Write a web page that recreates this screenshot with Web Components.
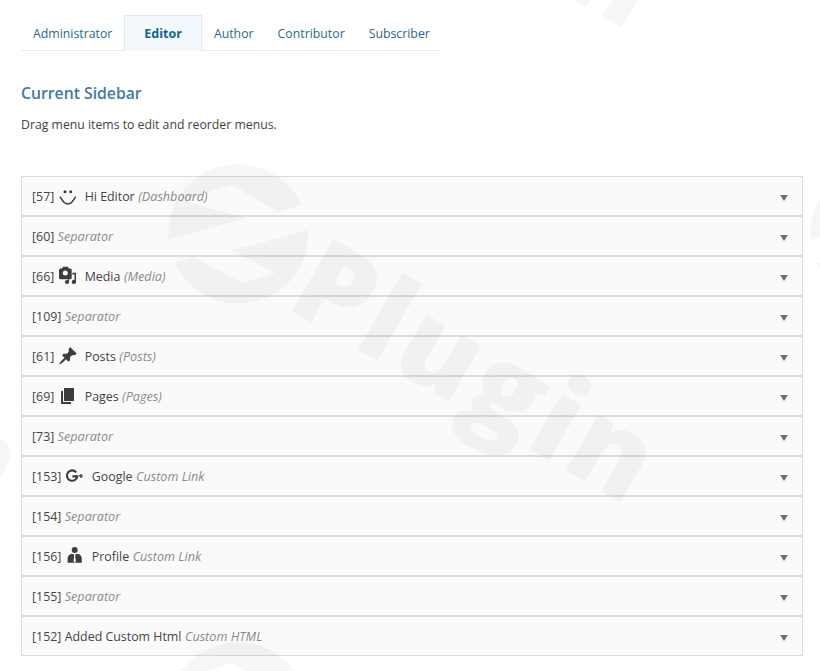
<!DOCTYPE html>
<html lang="en">
<head>
<meta charset="utf-8">
<title>Current Sidebar</title>
<style>
html,body{margin:0;padding:0;background:#fff;height:671px;overflow:hidden}
body{font-family:"Open Sans","Liberation Sans",sans-serif;color:#444;position:relative}
</style>
</head>
<body>
<admin-page>
  <role-tabs>
    <role-tab>Administrator</role-tab>
    <role-tab active>Editor</role-tab>
    <role-tab>Author</role-tab>
    <role-tab>Contributor</role-tab>
    <role-tab>Subscriber</role-tab>
  </role-tabs>
  <section-head title="Current Sidebar">Drag menu items to edit and reorder menus.</section-head>
  <menu-list>
    <menu-row icon="smiley" num="57" label="Hi Editor" kind="(Dashboard)"></menu-row>
    <menu-row num="60" kind="Separator"></menu-row>
    <menu-row icon="media" num="66" label="Media" kind="(Media)"></menu-row>
    <menu-row num="109" kind="Separator"></menu-row>
    <menu-row icon="pin" num="61" label="Posts" kind="(Posts)"></menu-row>
    <menu-row icon="pages" num="69" label="Pages" kind="(Pages)"></menu-row>
    <menu-row num="73" kind="Separator"></menu-row>
    <menu-row icon="gplus" num="153" label="Google" kind="Custom Link"></menu-row>
    <menu-row num="154" kind="Separator"></menu-row>
    <menu-row icon="person" num="156" label="Profile" kind="Custom Link"></menu-row>
    <menu-row num="155" kind="Separator"></menu-row>
    <menu-row num="152" label="Added Custom Html" kind="Custom HTML"></menu-row>
  </menu-list>
</admin-page>
<water-mark></water-mark>
<script>
const ICONS = {
  smiley:'<circle cx="7" cy="5.7" r="1.5"/><circle cx="12.7" cy="5.7" r="1.5"/><path d="M2 10.7Q9.8 25.5 17.7 10.7" fill="none" stroke="currentColor" stroke-width="1.5"/>',
  media:'<path fill-rule="evenodd" d="M2.500 2.500H4L5 .7H9.700L10.700 2.500H12.200Q13.700 2.500 13.700 4V11.800Q13.700 13.300 12.200 13.300H2.500Q1 13.300 1 11.800V4Q1 2.500 2.500 2.500ZM7.300 4.500A2.500 2.500 0 1 0 7.300 9.500A2.500 2.500 0 1 0 7.300 4.500Z"/><circle cx="9" cy="16" r="2.100"/><rect x="9.800" y="13.300" width="1.300" height="3"/><path d="M14.300 6.700H18V16A2.100 2.100 0 1 1 16.500 14V8.400H14.300Z"/>',
  pin:'<path d="M10.44 3.02l1.82-1.82 6.36 6.35-1.83 1.82c-1.05-.68-2.48-.57-3.41.36l-.75.75c-.92.93-1.04 2.35-.35 3.41l-1.83 1.82-2.41-2.41-2.8 2.79c-.42.42-3.38 2.71-3.8 2.29s1.86-3.39 2.28-3.81l2.79-2.79L4.1 9.36l1.83-1.82c1.05.69 2.48.57 3.4-.36l.75-.75c.93-.92 1.05-2.35.36-3.41z"/>',
  pages:'<path d="M6 15V2h10v13H6zm-1 1h8v2H3V5h2v11z"/>',
  gplus:'<path d="M11.200 6.300A5.200 5.200 0 1 0 12.300 10.400H7.400" fill="none" stroke="currentColor" stroke-width="2.100"/><path d="M14 9.300h1.300V8h1.300v1.300h1.300v1.300h-1.300v1.300h-1.300v-1.300H14z"/>',
  person:'<circle cx="9.700" cy="4" r="3"/><path fill-rule="evenodd" d="M6 8H13.400Q16.700 9 16.800 13V16.800H2.600V13Q2.700 9 6 8ZM8.500 8.300L9.200 10 8.500 15.500 9.700 16.500 10.900 15.500 10.200 10 10.900 8.300Z"/>'
};

class AdminPage extends HTMLElement {
  constructor(){
    super();
    this.attachShadow({mode:'open'}).innerHTML = `<style>
      :host{display:flex;flex-direction:column;padding:15px 17px 0 21px;font-family:"Open Sans","Liberation Sans",sans-serif}
    </style><slot></slot>`;
  }
}
class RoleTabs extends HTMLElement {
  constructor(){
    super();
    this.attachShadow({mode:'open'}).innerHTML = `<style>
      :host{display:flex;width:420px;height:36px;box-sizing:border-box;border-bottom:1px solid #e3ecf2}
    </style><slot></slot>`;
  }
}
class RoleTab extends HTMLElement {
  constructor(){
    super();
    this.attachShadow({mode:'open'}).innerHTML = `<style>
      :host{display:block;box-sizing:border-box;height:36px;padding:0 11px;line-height:35px;font-size:12.300px;color:#2b6a8c;border:1px solid transparent;border-bottom:0;white-space:nowrap}
      :host([active]){background:#f2f8fc;border-color:#dfe9f1;color:#106591;font-weight:700;font-size:12.500px;padding:0 19px}
    </style><slot></slot>`;
  }
}
class SectionHead extends HTMLElement {
  constructor(){
    super();
    this.attachShadow({mode:'open'}).innerHTML = `<style>
      :host{display:block;height:125px}
      h2{margin:31px 0 0;font-size:15.750px;line-height:22px;font-weight:600;color:#3f7ba6}
      p{margin:12px 0 0;font-size:12.250px;line-height:18px;color:#444}
    </style><h2></h2><p><slot></slot></p>`;
  }
  connectedCallback(){ this.shadowRoot.querySelector('h2').textContent = this.getAttribute('title'); }
}
class MenuList extends HTMLElement {
  constructor(){
    super();
    this.attachShadow({mode:'open'}).innerHTML = `<style>
      :host{display:flex;flex-direction:column}
    </style><slot></slot>`;
  }
}
class MenuRow extends HTMLElement {
  constructor(){
    super();
    this.attachShadow({mode:'open'}).innerHTML = `<style>
      :host{display:flex;align-items:center;box-sizing:border-box;height:40px;background:#fafafa;border:1px solid #dcdcdc;padding:0 14px 0 10px;font-size:12.400px;color:#444;white-space:nowrap}
      .num{margin-right:3.300px}
      svg{display:block;width:20px;height:20px;margin:0 6.800px 0 .3px;fill:currentColor;color:#3d3d3d;flex:none}
      .label{margin-right:3.500px}
      em{font-style:italic;font-size:12.650px;color:#8a8a8a}
      i{margin:3px 0 0 auto;width:0;height:0;border-style:solid;border-width:6px 4px 0;border-color:#6d7277 transparent transparent}
    </style><span class="num"></span><span class="label"></span><em></em><i></i>`;
  }
  connectedCallback(){
    const s = this.shadowRoot, num = s.querySelector('.num'), label = s.querySelector('.label');
    num.textContent = '[' + this.getAttribute('num') + ']';
    s.querySelector('em').textContent = this.getAttribute('kind');
    if (this.hasAttribute('label')) label.textContent = this.getAttribute('label'); else label.remove();
    const ic = this.getAttribute('icon');
    if (ic) num.insertAdjacentHTML('afterend', '<svg viewBox="0 0 20 20" aria-hidden="true">' + ICONS[ic] + '</svg>');
  }
}
class WaterMark extends HTMLElement {
  constructor(){
    super();
    const logo = (dx,dy) => `<g transform="translate(${dx} ${dy})">
      <path d="M168.300 240A70 70 0 0 1 301.700 205L278.300 211.700 231.700 185 183.300 200 245 218.300Z"/>
      <path d="M308.300 230A70 70 0 0 1 175 263.300L193.300 256.700 241.700 282.700 275 273.300 231.700 250Z"/>
    </g>`;
    this.attachShadow({mode:'open'}).innerHTML = `<style>
      :host{display:block;position:absolute;left:0;top:0;width:820px;height:671px;overflow:hidden;pointer-events:none}
      svg{display:block;width:820px;height:671px;fill:rgba(0,0,0,.036);font-family:"Open Sans","Liberation Sans",sans-serif}
    </style><svg viewBox="0 0 820 671">
      ${logo(0,0)}${logo(642,0)}${logo(0,478)}
      <text transform="translate(284 306.500) rotate(30.200)" font-size="117" font-weight="800" letter-spacing="3.800">Plugin</text>
      <path d="M601.700 15L621.700 27.300 637.300 0H613.300Z"/>
      <path d="M573 0L585 6.700 590.700 0Z"/>
      <path d="M0 438Q12 444 10 456L0 480Z"/>
    </svg>`;
  }
}
customElements.define('admin-page',AdminPage);
customElements.define('role-tabs',RoleTabs);
customElements.define('role-tab',RoleTab);
customElements.define('section-head',SectionHead);
customElements.define('menu-list',MenuList);
customElements.define('menu-row',MenuRow);
customElements.define('water-mark',WaterMark);
</script>
</body>
</html>
